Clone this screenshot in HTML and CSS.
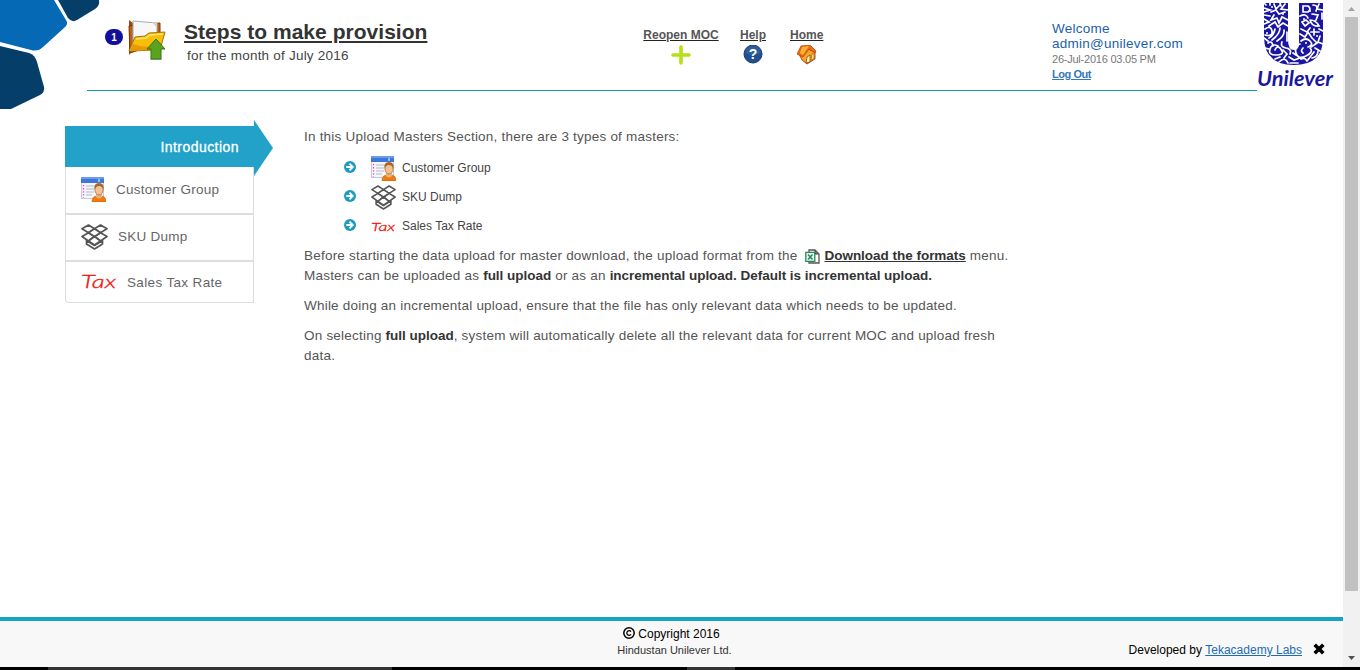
FILE: index.html
```html
<!DOCTYPE html>
<html lang="en">
<head>
<meta charset="utf-8">
<title>Steps to make provision</title>
<link rel="stylesheet" href="styles.css">
</head>
<body>
<svg class="defs" width="0" height="0" aria-hidden="true">
  <symbol id="people" viewBox="0 0 25 25">
    <rect x=".5" y=".5" width="22" height="21" fill="#f4f6fb" stroke="#c5cad8"/>
    <rect width="23" height="6" fill="#3d78d8"/><path d="M0 0h23v2H0z" fill="#6a9cec"/>
    <path d="M18 2v3" stroke="#fff"/>
    <path d="M2.500 8v13" stroke="#e33be0" stroke-width="1.300" stroke-dasharray="1.300 1.800"/>
    <path d="M5 9h15M5 12h8M5 15h8M5 18h6" stroke="#b5b8c2"/>
    <path d="M11 25q0-6 5-6h4q5 0 5 6z" fill="#ee7b0c" stroke="#c75d00" stroke-width=".6"/>
    <path d="M15 17h6v3q-3 3-6 0z" fill="#e9b47b"/>
    <ellipse cx="18" cy="13" rx="4" ry="5" fill="#f2c391" stroke="#94582a" stroke-width=".6"/>
    <path d="M13.500 13q-1-7 4.500-7t4.500 7q-1-4-4.500-4t-4.500 4z" fill="#a7642b"/>
  </symbol>
  <symbol id="boxes" viewBox="0 0 27 26" preserveAspectRatio="none">
    <g fill="#fff" stroke="#555" stroke-width="1.700" stroke-linejoin="round">
      <path d="M5.500 16.500v3.500l8 5 8-5v-3.500l-8 5z"/>
      <path d="M7.500 1l6 3.800-6 3.900L1 4.800zM19.500 1L26 4.800l-6.500 3.900-6-3.900z"/>
      <path d="M7.500 8.700l6 3.800-6 4.500L1 12.500zM19.500 8.700l6.500 3.800-6.500 4.500-6-4.500z"/>
      <path d="M13.500 4.800l6 3.900-6 3.800-6-3.800zM13.500 12.500l6 4.500-6 4-6-4z"/>
    </g>
  </symbol>
  <symbol id="bullet" viewBox="0 0 12 12">
    <circle cx="6" cy="6" r="6" fill="#1d9cc0"/>
    <path d="M2.300 6h6M5.500 2.700L8.800 6 5.500 9.300" fill="none" stroke="#fff" stroke-width="1.800"/>
  </symbol>
</svg>

<div class="window">
  <div class="page">
    <svg class="corner" width="101" height="110" viewBox="0 0 101 110">
      <path d="M0 0H54L66 20Q69 24 64 28L43 47Q38 52 31 50L0 42z" fill="#0569b5"/>
      <path d="M58 0H99Q100 6 95 9L77 20Q72 23 68 18z" fill="#043e69"/>
      <path d="M0 46L29 53Q35 55 37 62L44 87Q45 92 40 95L11 109H0z" fill="#043e69"/>
    </svg>

    <header class="header">
      <span class="step">1</span>
      <svg class="folder" width="40" height="42" viewBox="0 0 40 42">
        <path d="M2 1l4 3v27l-4 5z" fill="#9c4a0b"/>
        <path d="M2 7l31-3v20L3 34z" fill="#b6621a" stroke="#7a3608"/>
        <path d="M6 2l24 2v23L6 25z" fill="#f7f7f7" stroke="#aaa"/>
        <path d="M25 3l5 1v5z" fill="#d2d2d2"/>
        <path d="M2 32L8 18l10-1 4-3 16-1-5 18z" fill="#f7bd08" stroke="#a97408"/>
        <path d="M9 20l10-1 4-3 13-1" fill="none" stroke="#ffe76a" stroke-width="1.500"/>
        <path d="M3 32l28-1 3-7Q20 31 6 25z" fill="#e49a05"/>
        <path d="M23 40.500h12" stroke="#bbb"/>
        <path d="M29 20l9 10h-4v10H24V30h-4z" fill="#5aa41d" stroke="#35770e"/>
      </svg>
      <div class="heading">
        <h1 class="title">Steps to make provision</h1>
        <p class="subtitle">for the month of July 2016</p>
      </div>
      <nav class="tools">
        <a class="tool tool-reopen">Reopen MOC
          <svg width="20" height="20" viewBox="0 0 20 20"><path d="M10 2v16M2 10h16" stroke="#b5df16" stroke-width="3.600" stroke-linecap="round"/></svg>
        </a>
        <a class="tool tool-help">Help
          <svg width="20" height="20" viewBox="0 0 20 20"><circle cx="10" cy="9" r="9" fill="#21508f" stroke="#163d75"/><path d="M2 8a8 7 0 0 1 16 0q-8 4-16 0z" fill="#3f6ba5" opacity=".5"/><text class="qmark" x="10" y="14" text-anchor="middle">?</text></svg>
        </a>
        <a class="tool tool-home">Home
          <svg width="20" height="20" viewBox="0 0 20 20">
            <path d="M2 9l3 6 5 4 8-5V7l-7-3z" fill="#f7a722" stroke="#8a2f05" stroke-width=".8"/>
            <path d="M0 9l4-8 9-1 6 6-1 2-6-4-6 8z" fill="#ef6a0b" stroke="#b8390a" stroke-width=".7"/>
            <path d="M3 8l2-6 7-1-6 9z" fill="#ffb23e"/>
            <path d="M9 18l1-6 3-2v7z" fill="#fff3c4" stroke="#96400a" stroke-width=".8"/>
            <path d="M14 15l1-6 2-1v6z" fill="#ffe27a" stroke="#b45a10" stroke-width=".7"/>
          </svg>
        </a>
      </nav>
      <div class="account">
        <span class="greeting">Welcome</span>
        <span class="greeting">admin@unilever.com</span>
        <span class="stamp">26-Jul-2016 03.05 PM</span>
        <a class="logout">Log Out</a>
      </div>
    </header>

    <svg class="brand" width="80" height="92" viewBox="0 0 80 92">
      <path d="M8 3H32V40Q32 50 38 50T43 40V3H67V38Q67 65 38 65T8 38z" fill="#1a16a0"/>
      <g fill="none" stroke="#fff" stroke-width="1.700" stroke-linecap="round">
        <path d="M8 3l2 2M14 3v2M24 3l1 3M8 8l6 2-6 2M18 4l2 5 4-4M29 4l-4 5 7 1M15 12l5-2 3 4 6-2M8 15l6 1M18 15l-3 5 6-2 2 5 3-6 6 3M8 19l5 3-5 2M13 26l6-4 3 5 5-4 5 3M9 29q6-4 7 2t-7 4M19 29q-1 6-6 9M24 28q0 6-8 12M28 30q1 6-7 11M31 32v9M8 38l4 3M12 43q4-3 5 3"/>
        <path d="M22 46q-6-3-8 3t6 6 6-4-4-4-3 3M26 42q-2 5 4 6t4 6M27 50l4 4-3 4M9 48l4 1M14 57l3 4M19 59l5-2M23 62q6-6 9 1M33 57l5 3 6-2M34 63h8M37 53l3 2M44 44q-6 2-4 9t10 3 4-8M47 48q-3 3 0 5M45 59q4-2 6 2M51 61l7-9M56 58q6-1 6-7"/>
        <path d="M47 6h5q4 3 0 6h-5zM57 5q6 0 3 6M63 4l-2 5 6 1M44 16q6-3 8 2M56 14l6 1-2 5M66 13v6M46 22l4-2 3 3-4 3zM54 20q6 0 9 6-7 1-9-6M45 29l6 3 3-4M44 34l5 3 3-5 4 6M58 29v6M55 32h8M63 29l4 2M45 41q5-4 9 0t-2 6M57 39l4 4-6 4M64 36l-2 6 5 2M59 48l5 3"/>
      </g>
      <g fill="#fff"><circle cx="16" cy="7" r="1"/><circle cx="27" cy="14" r="1"/><circle cx="11" cy="33" r="1"/><circle cx="48" cy="19" r="1"/><circle cx="61" cy="36" r="1"/><circle cx="50" cy="43" r="1"/><circle cx="54" cy="11" r="1"/></g>
      <text class="wordmark" x="1" y="86" textLength="76" lengthAdjust="spacingAndGlyphs">Unilever</text>
    </svg>

    <main class="content">
      <ul class="menu">
        <li class="menu-active">Introduction
          <svg class="pointer" width="19" height="56" viewBox="0 0 19 56"><path d="M0 0l19 28L0 56z" fill="#22a2c9"/></svg>
        </li>
        <li class="menu-item menu-first"><svg width="25" height="25"><use href="#people"/></svg><span>Customer Group</span></li>
        <li class="menu-item"><svg width="27" height="26"><use href="#boxes"/></svg><span>SKU Dump</span></li>
        <li class="menu-item menu-last"><svg class="tax-icon" width="36" height="24" viewBox="0 0 36 24"><text class="tax tax-large" x="0" y="18" textLength="35" lengthAdjust="spacingAndGlyphs">Tax</text></svg><span class="menu-tax">Sales Tax Rate</span></li>
      </ul>
      <article class="article">
        <p>In this Upload Masters Section, there are 3 types of masters:</p>
        <ul class="masters">
          <li><svg class="bullet" width="12" height="12"><use href="#bullet"/></svg><svg class="master-icon" width="25" height="25"><use href="#people"/></svg>Customer Group</li>
          <li><svg class="bullet" width="12" height="12"><use href="#bullet"/></svg><svg class="master-icon" width="25" height="25"><use href="#boxes"/></svg>SKU Dump</li>
          <li><svg class="bullet" width="12" height="12"><use href="#bullet"/></svg><svg class="master-icon tax-icon" width="25" height="18" viewBox="0 0 25 18"><text class="tax tax-small" x="0" y="13" textLength="24" lengthAdjust="spacingAndGlyphs">Tax</text></svg>Sales Tax Rate</li>
        </ul>
        <p>Before starting the data upload for master download, the upload format from the
          <svg class="sheet" width="15" height="15" viewBox="0 0 15 15"><path d="M4 1h6l4 4v9H4z" fill="#fff" stroke="#555" stroke-width="1.300"/><path d="M10 1v4h4" fill="#777" stroke="#444"/><path d="M.8 3.300h9v9H.8z" fill="#eef8f1" stroke="#23895a" stroke-width="1.300"/><path d="M3 5.500l4.500 5M7.500 5.500L3 10.500" stroke="#23895a" stroke-width="1.500"/></svg>
          <a class="download">Download the formats</a> menu.<br>Masters can be uploaded as <b>full upload</b> or as an <b>incremental upload. Default is incremental upload.</b></p>
        <p>While doing an incremental upload, ensure that the file has only relevant data which needs to be updated.</p>
        <p>On selecting <b>full upload</b>, system will automatically delete all the relevant data for current MOC and upload fresh<br>data.</p>
      </article>
    </main>

    <footer class="footer">
      <div class="legal">
        <span class="copyright"><svg width="12" height="12" viewBox="0 0 12 12" fill="none" stroke="#000"><circle cx="6" cy="6" r="5.200" stroke-width="1.500"/><path d="M8 4.600a2.300 2.300 0 1 0 0 2.800" stroke-width="1.300"/></svg>Copyright 2016</span>
        <span class="company">Hindustan Unilever Ltd.</span>
      </div>
      <div class="credit">Developed by <a class="labs">Tekacademy Labs</a>
        <svg class="close" width="12" height="12" viewBox="0 0 12 12"><path d="M1.700 1.700l8.600 8.600M10.300 1.700l-8.600 8.600" stroke="#000" stroke-width="3.600"/></svg>
      </div>
    </footer>
  </div>
  <div class="scrollbar">
    <svg width="17" height="17" viewBox="0 0 17 17"><path d="M5 11l3.500-4L12 11z" fill="#a3a3a3"/></svg>
    <div class="thumb"></div>
    <svg width="17" height="17" viewBox="0 0 17 17"><path d="M5 6l3.500 4L12 6z" fill="#505050"/></svg>
  </div>
</div>
<div class="taskbar"><span class="task task-wide"></span><span class="task task-gap"></span></div>
</body>
</html>
```

FILE: styles.css
```css
* { box-sizing: border-box; }
body { margin: 0; height: 670px; overflow: hidden; display: flex; flex-direction: column; background: #fff; font: 13.5px/20px "Liberation Sans", Arial, sans-serif; letter-spacing: .215px; color: #555; }
svg { display: block; flex: none; }
h1, p, ul { margin: 0; padding: 0; }
ul { list-style: none; }
.defs { position: absolute; }
.window { display: flex; height: 667px; }
.page { position: relative; width: 1343px; display: flex; flex-direction: column; }
.corner { position: absolute; left: 0; top: 0; }
.brand { position: absolute; left: 1256px; top: 0; }

.header { width: 1170px; height: 91px; margin-left: 87px; padding-left: 18px; display: flex; align-items: flex-start; border-bottom: 1px solid #0d9ca3; }
.step { width: 18px; height: 16px; margin-top: 29px; border-radius: 8px; background: #120f9c; color: #fff; font-size: 10px; font-weight: bold; letter-spacing: 0; line-height: 17px; text-align: center; }
.folder { margin: 19px 0 0 4px; }
.heading { width: 459px; margin: 20px 0 0 17px; }
.title { font-size: 21px; line-height: 24px; letter-spacing: .03px; color: #333; text-decoration: underline; white-space: nowrap; }
.subtitle { margin: 2px 0 0 3px; color: #444; }
.tools { display: flex; width: 409px; margin-top: 27px; font-size: 12px; line-height: 16px; font-weight: bold; letter-spacing: 0; color: #555; }
.tool { display: flex; flex-direction: column; align-items: center; text-decoration: underline; text-decoration-color: #222; white-space: nowrap; }
.tool svg { margin-top: 2px; }
.tool-reopen { width: 76px; }
.tool-help { margin-left: 21px; }
.tool-home { margin-left: 24px; }
.qmark { font-size: 14px; font-weight: bold; fill: #fff; }
.account { display: flex; flex-direction: column; align-items: flex-start; margin-top: 21px; line-height: 15px; letter-spacing: 0; color: #1c5fa8; white-space: nowrap; }
.greeting { letter-spacing: .26px; }
.stamp { margin-top: 1px; font-size: 11px; letter-spacing: -.23px; color: #777; }
.logout { font-size: 11px; font-weight: bold; letter-spacing: -.45px; color: #337ab7; text-decoration: underline; }
.wordmark { font: italic bold 20px Lato, sans-serif; letter-spacing: 0; fill: #1a16a0; }

.content { display: flex; flex: 1; padding: 35px 0 0 65px; }
.menu { width: 189px; color: #666; }
.menu-active { position: relative; height: 41px; padding-right: 15px; background: #22a2c9; color: #fff; font-size: 14px; letter-spacing: .45px; line-height: 42px; text-align: right; -webkit-text-stroke: .3px #fff; }
.pointer { position: absolute; left: 189px; top: -6px; }
.menu-item { display: flex; align-items: center; gap: 10px; height: 47px; padding: 0 0 2px 15px; border: solid #ddd; border-width: 0 1px 2px; }
.menu-item span { letter-spacing: .25px; padding-top: 1px; }
.menu-first { height: 48px; padding-bottom: 1px; }
.menu-item .menu-tax { letter-spacing: .35px; }
.menu-last { height: 41px; padding-bottom: 0; border-bottom-width: 1px; border-radius: 0 0 0 4px; }
.tax-icon { overflow: visible; }
.tax { font-family: Lato, sans-serif; font-style: italic; font-weight: 300; letter-spacing: 0; fill: #f2130c; stroke: #f2130c; stroke-width: .3px; }
.tax-large { font-size: 17px; }
.tax-small { font-size: 12px; }
.article { width: 740px; margin-left: 50px; padding-top: 1px; color: #555; }
.article p { margin-bottom: 10px; white-space: nowrap; }
.article b, .download { color: #333; font-weight: bold; letter-spacing: -.02px; }
.masters { margin: -4px 0 6px 40px; font-size: 12px; letter-spacing: 0; color: #444; }
.masters li { display: flex; align-items: center; height: 29px; }
.bullet { margin-bottom: 2px; }
.master-icon { margin: 2px 6px 0 15px; }
.sheet { display: inline-block; margin: 0 0 0 4px; vertical-align: -4px; }
.download { text-decoration: underline; }

.footer { height: 50px; display: flex; position: relative; justify-content: center; border-top: 4px solid #14a4c8; background: #f8f8f8; color: #000; font-size: 12px; letter-spacing: 0; }
.legal { display: flex; flex-direction: column; align-items: center; padding-top: 5px; line-height: 16px; }
.copyright { display: flex; align-items: center; gap: 3px; }
.copyright svg { margin-bottom: 2px; }
.company { padding-left: 6px; font-size: 11px; color: #333; }
.credit { position: absolute; right: 18px; top: 21px; display: flex; align-items: center; line-height: 16px; white-space: pre; }
.labs { color: #1c6cb5; text-decoration: underline; }
.close { margin: 0 0 2px 11px; }

.scrollbar { display: flex; flex-direction: column; align-items: center; justify-content: space-between; width: 17px; height: 667px; background: #f1f1f1; }
.thumb { width: 13px; height: 574px; margin-bottom: auto; background: #c1c1c1; }
.taskbar { display: flex; height: 3px; padding-left: 48px; background: #000; }
.task { background: #333; }
.task-wide { width: 344px; }
.task-gap { width: 48px; margin-left: 295px; }
```
